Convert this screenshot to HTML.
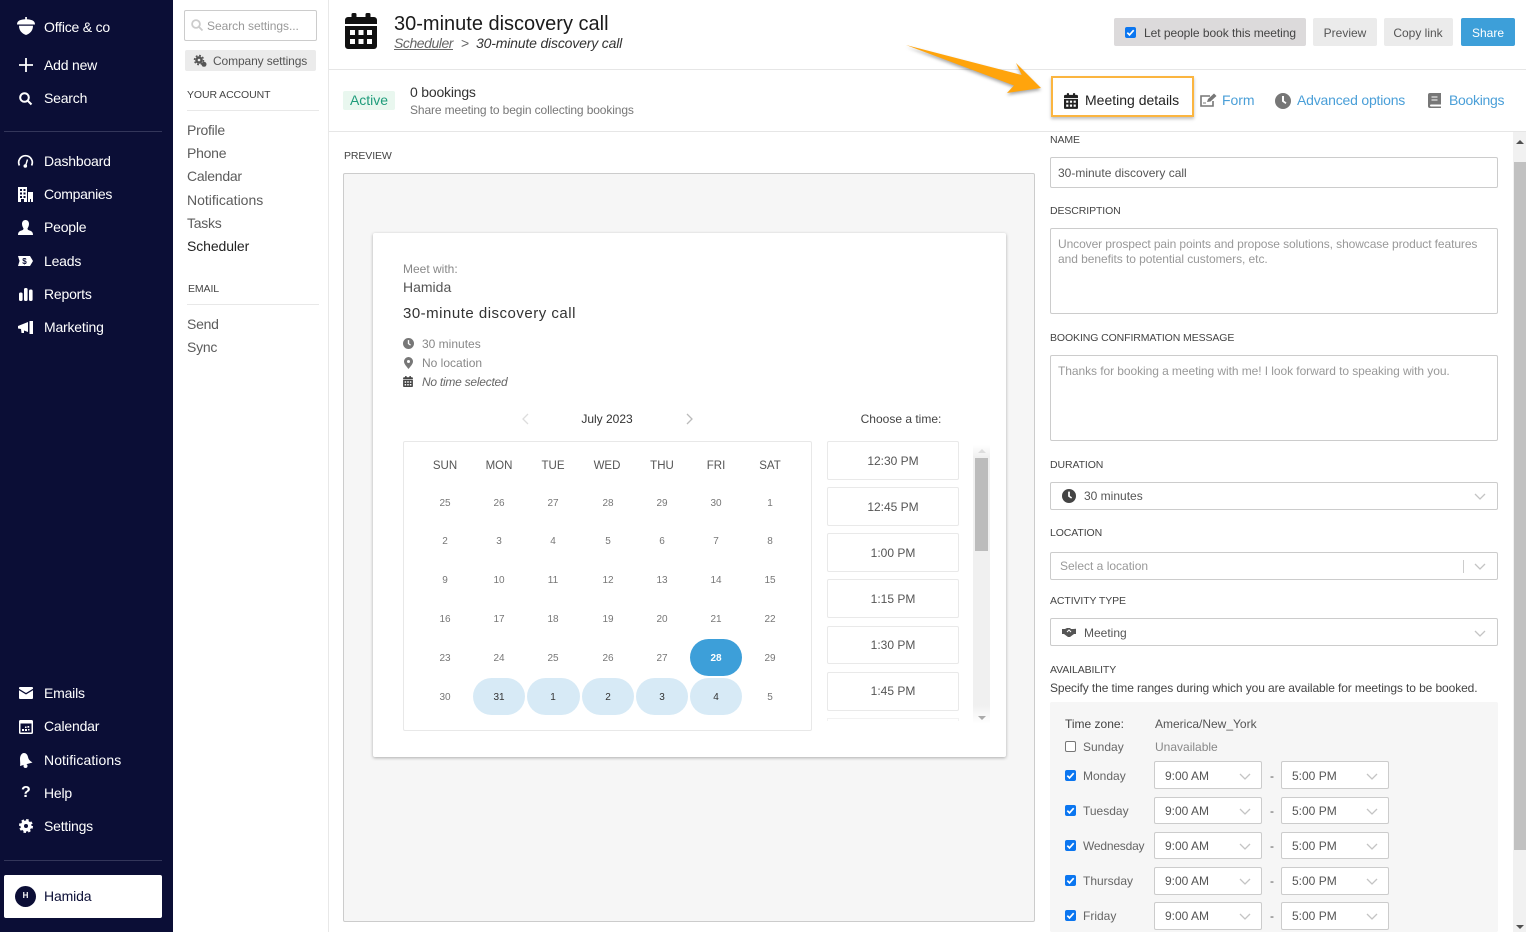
<!DOCTYPE html>
<html lang="en"><head><meta charset="utf-8"><title>30-minute discovery call</title>
<style>
html,body{margin:0;padding:0;width:1526px;height:932px;overflow:hidden;background:#fff}
body{position:relative;font-family:"Liberation Sans",Arial,sans-serif;font-size:14px;color:#333}
.t{position:absolute;white-space:nowrap;line-height:20px}
.c{transform:translateX(-50%);text-align:center}
.b{position:absolute;box-sizing:border-box}
svg.i{position:absolute;overflow:visible}
.w{color:#fff;letter-spacing:-.2px}
.s{color:#5c5c5c;letter-spacing:-.25px}
.l{font-size:10.5px;color:#444;letter-spacing:-.1px}
.f{font-size:12px;color:#555}
.ph{font-size:12px;color:#999}
.in{background:#fff;border:1px solid #ccc;border-radius:2px}
.d{font-size:10px;color:#777}
.h{font-size:11.5px;color:#555}
.sl{background:#fff;border:1px solid #e9e9e9;border-radius:2px;width:132px;height:39px;left:827px}
.tm{font-size:12px;color:#555}
.m{font-size:12px;color:#666}
.p{background:#d7eaf6;border-radius:19px;height:37px;top:678px}
.a{font-size:12px;color:#444}
.bl{color:#4a9fd8}
</style></head><body>
<svg width="0" height="0" style="position:absolute"><defs>
<symbol id="cal" viewBox="0 0 32 36"><path d="M8 0h2a1.5 1.5 0 0 1 1.5 1.5V4h9V1.500A1.500 1.500 0 0 1 22 0h2a1.500 1.500 0 0 1 1.500 1.500V4H29a3 3 0 0 1 3 3v4H0V7a3 3 0 0 1 3-3h3.500V1.500A1.500 1.500 0 0 1 8 0zM0 13h32v20a3 3 0 0 1-3 3H3a3 3 0 0 1-3-3zM5 17v5h5v-5zM13.500 17v5h5v-5zM22 17v5h5v-5zM5 26v5h5v-5zM13.500 26v5h5v-5zM22 26v5h5v-5z" fill-rule="evenodd"/></symbol>
<symbol id="clk" viewBox="0 0 16 16"><path d="M8 0a8 8 0 1 1 0 16A8 8 0 0 1 8 0zM7 3v5.500l3.500 2.500 1-1.400L9 7.800V3z" fill-rule="evenodd"/></symbol>
<symbol id="chv" viewBox="0 0 12 7"><path d="M1 1l5 5 5-5" fill="none" stroke="#c4c4c4" stroke-width="1.300"/></symbol>
<symbol id="chk" viewBox="0 0 11 11"><rect width="11" height="11" rx="2" fill="#0b76f0"/><path d="M2.300 5.700l2.200 2.200 4.200-4.700" fill="none" stroke="#fff" stroke-width="1.700"/></symbol>
</defs></svg>

<!-- sidebar -->
<div class="b" style="left:0;top:0;width:173px;height:932px;background:#0b0e36"></div>
<div class="b" style="left:4px;top:131px;width:158px;height:1px;background:#33365a"></div>
<div class="b" style="left:4px;top:860px;width:158px;height:1px;background:#33365a"></div>
<div class="b" style="left:4px;top:875px;width:158px;height:43px;background:#fff;border-radius:2px"></div>
<div class="b" style="left:15px;top:886px;width:21px;height:21px;border-radius:50%;background:#0b0e36"></div>
<div class="t" style="left:15px;width:21px;text-align:center;top:886px;font-size:8px;font-weight:bold;color:#fff">H</div>

<svg class="i" style="left:17px;top:17px" width="18" height="18" viewBox="0 0 18 18" fill="#fff"><path d="M8.200 0h1.700v2.200C12 2.300 14 2.700 15.500 3.400 17.200 4.200 18 5.500 18 7.500H0C0 5.500.8 4.200 2.500 3.400 4 2.700 6 2.300 8.200 2.200z"/><path d="M2 8.800h14C16 13.500 13.200 16.600 9 18 4.800 16.600 2 13.500 2 8.800z"/></svg>
<svg class="i" style="left:19px;top:58px" width="14" height="14" fill="none" stroke="#fff" stroke-width="1.800"><path d="M7 0v14M0 7h14"/></svg>
<svg class="i" style="left:19px;top:92px" width="13" height="13" fill="none" stroke="#fff" stroke-width="2"><circle cx="5.500" cy="5.500" r="4.300"/><path d="M8.500 8.500l4 4"/></svg>
<svg class="i" style="left:18px;top:155px" width="15" height="13" fill="none" stroke="#fff" stroke-width="1.700"><path d="M1.400 10.500A6.800 6.800 0 1 1 13.600 10.500"/><path d="M9.500 4.500L7.500 11" stroke-width="1.400"/><circle cx="7.300" cy="11" r="1.800" fill="#fff" stroke="none"/></svg>
<svg class="i" style="left:18px;top:187px" width="15" height="15" viewBox="0 0 15 15" fill="#fff"><path d="M0 0h9v15H6v-3H3v3H0zM2 2v2h2V2zM5.500 2v2h2V2zM2 5.500v2h2v-2zM5.500 5.500v2h2v-2zM2 9v2h2V9zM5.500 9v2h2V9zM10 5h5v10h-2v-3h-1v3h-2z" fill-rule="evenodd"/></svg>
<svg class="i" style="left:18px;top:220px" width="15" height="15" viewBox="0 0 15 15" fill="#fff"><path d="M7.500 0C10 0 11 2 11 4c0 2-1 3.500-1.500 4.500 0 1 .5 1.500 2 2 2 .6 3.500 1.500 3.500 4.500H0c0-3 1.500-3.900 3.500-4.500 1.500-.5 2-1 2-2C5 7.500 4 6 4 4c0-2 1-4 3.500-4z"/></svg>
<svg class="i" style="left:18px;top:256px" width="15" height="10" viewBox="0 0 15 10"><path d="M0 0h12l3 5-3 5H0l1.500-5z" fill="#fff"/><text x="6.500" y="8" font-size="8" font-weight="bold" fill="#0b0e36" text-anchor="middle" font-family="Liberation Sans">$</text></svg>
<svg class="i" style="left:19px;top:288px" width="14" height="13" fill="#fff"><rect x="0" y="4.500" width="3.600" height="8.500" rx="1.500"/><rect x="5" y="0" width="3.600" height="13" rx="1.500"/><rect x="10" y="1.500" width="3.600" height="11.500" rx="1.500"/></svg>
<svg class="i" style="left:18px;top:321px" width="15" height="13" viewBox="0 0 15 13" fill="#fff"><path d="M0 5l10-4v10L6 9.500 6 12H3.500L3 8 0 7.500zM11.500 0H15v13h-3.500z" /></svg>
<svg class="i" style="left:19px;top:687px" width="14" height="12" viewBox="0 0 14 12" fill="#fff"><path d="M1 0h12a1 1 0 0 1 1 1v.8L7 6 0 1.800V1a1 1 0 0 1 1-1zM0 3.300L7 7.500l7-4.200V11a1 1 0 0 1-1 1H1a1 1 0 0 1-1-1z"/></svg>
<svg class="i" style="left:19px;top:720px" width="14" height="14" viewBox="0 0 14 14"><rect width="14" height="14" rx="1.500" fill="#fff"/><rect x="1.500" y="3.500" width="11" height="9" fill="#0b0e36"/><path d="M3 9h2v2H3zM6 9h2v2H6zM8.500 6h1.700v1.700H8.500zM6 6.500h1.500V8H6zM9 9h1.500v1.500H9z" fill="#fff"/></svg>
<svg class="i" style="left:19px;top:753px" width="14" height="15" viewBox="0 0 14 15" fill="#fff"><path d="M5 0c2 0 3.500 1.500 4 4 .5 2.500 2 4 4.500 5.500L1 13C1.500 10.500 1 8 1 6 1 3 2.500 0 5 0z"/><circle cx="6.500" cy="13" r="2"/></svg>
<div class="t w" style="left:21px;top:783px;font-size:16px;font-weight:bold">?</div>
<svg class="i" style="left:19px;top:819px" width="14" height="14" viewBox="0 0 14 14"><circle cx="7" cy="7" r="5.500" fill="#fff"/><circle cx="7" cy="7" r="6" fill="none" stroke="#fff" stroke-width="2" stroke-dasharray="2.500 2.210"/><circle cx="7" cy="7" r="2" fill="#0b0e36"/></svg>

<div class="t w" style="left:44px;top:17px">Office &amp; co</div>
<div class="t w" style="left:44px;top:55px">Add new</div>
<div class="t w" style="left:44px;top:88px">Search</div>
<div class="t w" style="left:44px;top:151px">Dashboard</div>
<div class="t w" style="left:44px;top:184px;letter-spacing:-.3px">Companies</div>
<div class="t w" style="left:44px;top:217px">People</div>
<div class="t w" style="left:44px;top:251px">Leads</div>
<div class="t w" style="left:44px;top:284px">Reports</div>
<div class="t w" style="left:44px;top:317px">Marketing</div>
<div class="t w" style="left:44px;top:683px">Emails</div>
<div class="t w" style="left:44px;top:716px">Calendar</div>
<div class="t w" style="left:44px;top:750px;letter-spacing:.08px">Notifications</div>
<div class="t w" style="left:44px;top:783px">Help</div>
<div class="t w" style="left:44px;top:816px">Settings</div>
<div class="t" style="left:44px;top:886px;color:#0b0e36;letter-spacing:-.15px">Hamida</div>

<!-- settings col -->
<div class="b" style="left:328px;top:0;width:1px;height:932px;background:#e8e8e8"></div>
<div class="b" style="left:184px;top:10px;width:133px;height:31px;border:1px solid #ccc;border-radius:2px"></div>
<svg class="i" style="left:191px;top:19px" width="12" height="12" fill="none" stroke="#ccc" stroke-width="1.800"><circle cx="5" cy="5" r="3.900"/><path d="M8 8l3.500 3.500"/></svg>
<div class="t ph" style="left:207px;top:16px;letter-spacing:-.05px">Search settings...</div>
<div class="b" style="left:185px;top:50px;width:131px;height:21px;background:#ebebeb;border-radius:2px"></div>
<svg class="i" style="left:194px;top:55px" width="13" height="12" viewBox="0 0 13 12"><circle cx="5" cy="5" r="3.800" fill="#555"/><circle cx="5" cy="5" r="4.500" fill="none" stroke="#555" stroke-width="1.500" stroke-dasharray="1.800 1.730"/><circle cx="5" cy="5" r="1.300" fill="#ebebeb"/><circle cx="10" cy="9.300" r="2.500" fill="#555"/></svg>
<div class="t f" style="left:213px;top:51px;letter-spacing:-.12px">Company settings</div>
<div class="t l" style="left:187px;top:85px">YOUR ACCOUNT</div>
<div class="b" style="left:187px;top:110px;width:132px;height:1px;background:#e8e8e8"></div>
<div class="t s" style="left:187px;top:120px">Profile</div>
<div class="t s" style="left:187px;top:143px">Phone</div>
<div class="t s" style="left:187px;top:166px">Calendar</div>
<div class="t s" style="left:187px;top:190px;letter-spacing:0">Notifications</div>
<div class="t s" style="left:187px;top:213px">Tasks</div>
<div class="t" style="left:187px;top:236px;color:#222;letter-spacing:-.1px">Scheduler</div>
<div class="t l" style="left:188px;top:279px">EMAIL</div>
<div class="b" style="left:187px;top:304px;width:132px;height:1px;background:#e8e8e8"></div>
<div class="t s" style="left:187px;top:314px">Send</div>
<div class="t s" style="left:187px;top:337px">Sync</div>

<!-- header -->
<div class="b" style="left:329px;top:69px;width:1197px;height:1px;background:#e6e6e6"></div>
<div class="b" style="left:329px;top:131px;width:1197px;height:1px;background:#e6e6e6"></div>
<svg class="i" style="left:345px;top:13px;fill:#111" width="32" height="36"><use href="#cal"/></svg>
<div class="t" style="left:394px;top:14px;font-size:20px;color:#1b1b1b">30-minute discovery call</div>
<div class="t" style="left:394px;top:33px;font-style:italic;color:#666;text-decoration:underline;letter-spacing:-.45px">Scheduler</div>
<div class="t" style="left:461px;top:33px;color:#666">&gt;</div>
<div class="t" style="left:476px;top:33px;font-style:italic;color:#333;letter-spacing:-.17px">30-minute discovery call</div>

<div class="b" style="left:1114px;top:18px;width:192px;height:28px;background:#dcdadb;border-radius:2px"></div>
<svg class="i" style="left:1125px;top:27px" width="11" height="11"><use href="#chk"/></svg>
<div class="t a" style="left:1144px;top:23px;letter-spacing:-.05px">Let people book this meeting</div>
<div class="b" style="left:1313px;top:18px;width:64px;height:28px;background:#ebebeb;border-radius:2px"></div>
<div class="t a c" style="left:1345px;top:23px;color:#555">Preview</div>
<div class="b" style="left:1384px;top:18px;width:69px;height:28px;background:#ebebeb;border-radius:2px"></div>
<div class="t a c" style="left:1418px;top:23px;color:#555">Copy link</div>
<div class="b" style="left:1461px;top:18px;width:54px;height:28px;background:#3d9fd9;border-radius:2px"></div>
<div class="t a c" style="left:1488px;top:23px;color:#fff">Share</div>

<div class="b" style="left:343px;top:91px;width:52px;height:19px;background:#e9f7ef;border-radius:2px"></div>
<div class="t c" style="left:369px;top:90px;color:#1f9c7b">Active</div>
<div class="t" style="left:410px;top:82px;color:#333;letter-spacing:-.2px">0 bookings</div>
<div class="t" style="left:410px;top:100px;font-size:12px;color:#777;letter-spacing:-.12px">Share meeting to begin collecting bookings</div>

<!-- arrow -->
<svg class="i" style="left:900px;top:40px;filter:drop-shadow(0 2px 1.500px rgba(0,0,0,.35))" width="150" height="60" viewBox="900 40 150 60"><path d="M906 45L1021.700 75L1016 63L1041 88L1007 93L1014 85.500Z" fill="#ffa40c"/></svg>

<!-- tabs -->
<div class="b" style="left:1051px;top:76px;width:143px;height:41px;background:#fff;border:2px solid #fbb540;box-shadow:0 2px 3px rgba(0,0,0,.25)"></div>
<svg class="i" style="left:1064px;top:93px;fill:#222" width="14" height="16"><use href="#cal"/></svg>
<div class="t" style="left:1085px;top:90px;color:#222">Meeting details</div>
<svg class="i" style="left:1200px;top:93px" width="17" height="14" viewBox="0 0 17 14"><path d="M10 3H1v10h12V8" fill="none" stroke="#777" stroke-width="1.600"/><path d="M7 9l1-3 6-5.500L16.500 3l-6 5.500z" fill="#777"/><path d="M3 10h3" stroke="#777"/></svg>
<div class="t bl" style="left:1222px;top:90px;letter-spacing:-.05px">Form</div>
<svg class="i" style="left:1275px;top:93px;fill:#777" width="16" height="16"><use href="#clk"/></svg>
<div class="t bl" style="left:1297px;top:90px;letter-spacing:-.2px">Advanced options</div>
<svg class="i" style="left:1428px;top:93px" width="13" height="15" viewBox="0 0 13 15"><path d="M2 0h11v11.500H3a1 1 0 0 0 0 2h10V15H2a2 2 0 0 1-2-2V2a2 2 0 0 1 2-2zM3.500 3.500v1h6v-1zM3.500 6.500v1h6v-1z" fill="#777" fill-rule="evenodd"/></svg>
<div class="t bl" style="left:1449px;top:90px;letter-spacing:-.3px">Bookings</div>

<!-- preview -->
<div class="t l" style="left:344px;top:146px">PREVIEW</div>
<div class="b" style="left:343px;top:173px;width:692px;height:749px;background:#f6f6f6;border:1px solid #ccc;border-radius:2px"></div>
<div class="b" style="left:373px;top:233px;width:633px;height:524px;background:#fff;border-radius:2px;box-shadow:0 1px 3px rgba(0,0,0,.3)"></div>
<div class="t m" style="left:403px;top:259px;color:#888">Meet with:</div>
<div class="t" style="left:403px;top:277px;color:#555">Hamida</div>
<div class="t" style="left:403px;top:304px;font-size:15px;color:#333;letter-spacing:.5px">30-minute discovery call</div>
<svg class="i" style="left:403px;top:338px;fill:#777" width="11" height="11"><use href="#clk"/></svg>
<div class="t m" style="left:422px;top:334px;color:#888">30 minutes</div>
<svg class="i" style="left:404px;top:357px" width="9" height="12" viewBox="0 0 9 12"><path d="M4.500 0A4.500 4.500 0 0 1 9 4.500C9 7 6 10 4.500 12 3 10 0 7 0 4.500A4.500 4.500 0 0 1 4.500 0zm0 3a1.500 1.500 0 1 0 0 3 1.500 1.500 0 0 0 0-3z" fill="#777" fill-rule="evenodd"/></svg>
<div class="t m" style="left:422px;top:353px;color:#888">No location</div>
<svg class="i" style="left:403px;top:376px;fill:#444" width="10" height="11"><use href="#cal"/></svg>
<div class="t m" style="left:422px;top:372px;font-style:italic;color:#666;letter-spacing:-.25px">No time selected</div>
<svg class="i" style="left:522px;top:414px" width="7" height="10" fill="none" stroke="#ddd" stroke-width="1.300"><path d="M6 0L1 5l5 5"/></svg>
<svg class="i" style="left:686px;top:414px" width="7" height="10" fill="none" stroke="#bbb" stroke-width="1.300"><path d="M1 0l5 5-5 5"/></svg>
<div class="t c" style="left:607px;top:409px;font-size:12px;color:#333">July 2023</div>
<div class="t c" style="left:901px;top:409px;font-size:12px;color:#444">Choose a time:</div>

<div class="b" style="left:403px;top:441px;width:409px;height:290px;border:1px solid #e8e8e8;border-radius:2px"></div>
<div class="t h c" style="left:445px;top:456px">SUN</div><div class="t h c" style="left:499px;top:456px">MON</div><div class="t h c" style="left:553px;top:456px">TUE</div><div class="t h c" style="left:607px;top:456px">WED</div><div class="t h c" style="left:662px;top:456px">THU</div><div class="t h c" style="left:716px;top:456px">FRI</div><div class="t h c" style="left:770px;top:456px">SAT</div>

<div class="t d c" style="left:445px;top:494px">25</div><div class="t d c" style="left:499px;top:494px">26</div><div class="t d c" style="left:553px;top:494px">27</div><div class="t d c" style="left:608px;top:494px">28</div><div class="t d c" style="left:662px;top:494px">29</div><div class="t d c" style="left:716px;top:494px">30</div><div class="t d c" style="left:770px;top:494px">1</div>
<div class="t d c" style="left:445px;top:532px">2</div><div class="t d c" style="left:499px;top:532px">3</div><div class="t d c" style="left:553px;top:532px">4</div><div class="t d c" style="left:608px;top:532px">5</div><div class="t d c" style="left:662px;top:532px">6</div><div class="t d c" style="left:716px;top:532px">7</div><div class="t d c" style="left:770px;top:532px">8</div>
<div class="t d c" style="left:445px;top:571px">9</div><div class="t d c" style="left:499px;top:571px">10</div><div class="t d c" style="left:553px;top:571px">11</div><div class="t d c" style="left:608px;top:571px">12</div><div class="t d c" style="left:662px;top:571px">13</div><div class="t d c" style="left:716px;top:571px">14</div><div class="t d c" style="left:770px;top:571px">15</div>
<div class="t d c" style="left:445px;top:610px">16</div><div class="t d c" style="left:499px;top:610px">17</div><div class="t d c" style="left:553px;top:610px">18</div><div class="t d c" style="left:608px;top:610px">19</div><div class="t d c" style="left:662px;top:610px">20</div><div class="t d c" style="left:716px;top:610px">21</div><div class="t d c" style="left:770px;top:610px">22</div>
<div class="b" style="left:690px;top:639px;width:52px;height:37px;border-radius:19px;background:#3d9fd9"></div>
<div class="t d c" style="left:445px;top:649px">23</div><div class="t d c" style="left:499px;top:649px">24</div><div class="t d c" style="left:553px;top:649px">25</div><div class="t d c" style="left:608px;top:649px">26</div><div class="t d c" style="left:662px;top:649px">27</div><div class="t d c" style="left:716px;top:649px;color:#fff;font-weight:bold">28</div><div class="t d c" style="left:770px;top:649px">29</div>
<div class="b p" style="left:473px;width:52px"></div><div class="b p" style="left:527px;width:53px"></div><div class="b p" style="left:582px;width:52px"></div><div class="b p" style="left:636px;width:52px"></div><div class="b p" style="left:690px;width:52px"></div>
<div class="t d c" style="left:445px;top:688px">30</div><div class="t d c" style="left:499px;top:688px;color:#333">31</div><div class="t d c" style="left:553px;top:688px;color:#333">1</div><div class="t d c" style="left:608px;top:688px;color:#333">2</div><div class="t d c" style="left:662px;top:688px;color:#333">3</div><div class="t d c" style="left:716px;top:688px;color:#333">4</div><div class="t d c" style="left:770px;top:688px">5</div>

<div class="b sl" style="top:441px"></div><div class="t tm c" style="left:893px;top:451px">12:30 PM</div>
<div class="b sl" style="top:487px"></div><div class="t tm c" style="left:893px;top:497px">12:45 PM</div>
<div class="b sl" style="top:533px"></div><div class="t tm c" style="left:893px;top:543px">1:00 PM</div>
<div class="b sl" style="top:579px"></div><div class="t tm c" style="left:893px;top:589px">1:15 PM</div>
<div class="b sl" style="top:626px;height:38px"></div><div class="t tm c" style="left:893px;top:635px">1:30 PM</div>
<div class="b sl" style="top:672px"></div><div class="t tm c" style="left:893px;top:681px">1:45 PM</div>
<div class="b" style="left:827px;top:718px;width:132px;height:3px;border:1px solid #f2f2f2;border-bottom:0"></div>
<div class="b" style="left:973px;top:445px;width:17px;height:279px;background:linear-gradient(#fff 0,#f0f0f0 12px,#f0f0f0 260px,#fff 100%)"></div>
<div class="b" style="left:975px;top:458px;width:13px;height:93px;background:#bcbcbc"></div>
<div class="b" style="left:978px;top:449px;width:0;height:0;border:4px solid transparent;border-top:0;border-bottom:4px solid #ddd"></div>
<div class="b" style="left:978px;top:716px;width:0;height:0;border:4px solid transparent;border-bottom:0;border-top:4px solid #aaa"></div>

<!-- form -->
<div class="t l" style="left:1050px;top:130px">NAME</div>
<div class="b in" style="left:1050px;top:157px;width:448px;height:31px"></div>
<div class="t f" style="left:1058px;top:163px">30-minute discovery call</div>
<div class="t l" style="left:1050px;top:201px">DESCRIPTION</div>
<div class="b in" style="left:1050px;top:228px;width:448px;height:86px"></div>
<div class="t ph" style="left:1058px;top:234px;letter-spacing:-.09px">Uncover prospect pain points and propose solutions, showcase product features</div>
<div class="t ph" style="left:1058px;top:249px;letter-spacing:-.06px">and benefits to potential customers, etc.</div>
<div class="t l" style="left:1050px;top:328px">BOOKING CONFIRMATION MESSAGE</div>
<div class="b in" style="left:1050px;top:355px;width:448px;height:86px"></div>
<div class="t ph" style="left:1058px;top:361px;letter-spacing:-.07px">Thanks for booking a meeting with me! I look forward to speaking with you.</div>
<div class="t l" style="left:1050px;top:455px">DURATION</div>
<div class="b in" style="left:1050px;top:482px;width:448px;height:28px"></div>
<svg class="i" style="left:1062px;top:489px;fill:#444" width="14" height="14"><use href="#clk"/></svg>
<div class="t f" style="left:1084px;top:486px">30 minutes</div>
<svg class="i" style="left:1474px;top:493px" width="12" height="7"><use href="#chv"/></svg>
<div class="t l" style="left:1050px;top:523px">LOCATION</div>
<div class="b in" style="left:1050px;top:552px;width:448px;height:28px"></div>
<div class="t ph" style="left:1060px;top:556px">Select a location</div>
<div class="b" style="left:1463px;top:560px;width:1px;height:13px;background:#ccc"></div>
<svg class="i" style="left:1474px;top:563px" width="12" height="7"><use href="#chv"/></svg>
<div class="t l" style="left:1050px;top:591px">ACTIVITY TYPE</div>
<div class="b in" style="left:1050px;top:618px;width:448px;height:28px"></div>
<svg class="i" style="left:1062px;top:628px" width="14" height="9" viewBox="0 0 14 9"><path d="M0 1h3l2-1h3l1 1h2l3-.2V6h-2L8 9H6L2 6H0z" fill="#555"/><path d="M5 4l2-2 2 2" stroke="#fff" fill="none"/></svg>
<div class="t f" style="left:1084px;top:623px">Meeting</div>
<svg class="i" style="left:1474px;top:630px" width="12" height="7"><use href="#chv"/></svg>
<div class="t l" style="left:1050px;top:660px">AVAILABILITY</div>
<div class="t f" style="left:1050px;top:678px;color:#444;letter-spacing:-.1px">Specify the time ranges during which you are available for meetings to be booked.</div>
<div class="b" style="left:1050px;top:702px;width:448px;height:230px;background:#f6f6f6;border-radius:2px"></div>
<div class="t f" style="left:1065px;top:714px;color:#444">Time zone:</div>
<div class="t f" style="left:1155px;top:714px">America/New_York</div>
<div class="b" style="left:1065px;top:741px;width:11px;height:11px;background:#fff;border:1px solid #777;border-radius:2px"></div>
<div class="t f" style="left:1083px;top:737px;color:#666">Sunday</div>
<div class="t f" style="left:1155px;top:737px;color:#888">Unavailable</div>

<svg class="i" style="left:1065px;top:770px" width="11" height="11"><use href="#chk"/></svg><div class="t f" style="left:1083px;top:766px;color:#666">Monday</div>
<div class="b in" style="left:1154px;top:761px;width:108px;height:28px"></div><div class="t f" style="left:1165px;top:766px">9:00 AM</div><svg class="i" style="left:1239px;top:773px" width="12" height="7"><use href="#chv"/></svg><div class="t f" style="left:1270px;top:766px">-</div>
<div class="b in" style="left:1281px;top:761px;width:108px;height:28px"></div><div class="t f" style="left:1292px;top:766px">5:00 PM</div><svg class="i" style="left:1366px;top:773px" width="12" height="7"><use href="#chv"/></svg>

<svg class="i" style="left:1065px;top:805px" width="11" height="11"><use href="#chk"/></svg><div class="t f" style="left:1083px;top:801px;color:#666">Tuesday</div>
<div class="b in" style="left:1154px;top:797px;width:108px;height:27px"></div><div class="t f" style="left:1165px;top:801px">9:00 AM</div><svg class="i" style="left:1239px;top:808px" width="12" height="7"><use href="#chv"/></svg><div class="t f" style="left:1270px;top:801px">-</div>
<div class="b in" style="left:1281px;top:797px;width:108px;height:27px"></div><div class="t f" style="left:1292px;top:801px">5:00 PM</div><svg class="i" style="left:1366px;top:808px" width="12" height="7"><use href="#chv"/></svg>

<svg class="i" style="left:1065px;top:840px" width="11" height="11"><use href="#chk"/></svg><div class="t f" style="left:1083px;top:836px;color:#666;letter-spacing:-.2px">Wednesday</div>
<div class="b in" style="left:1154px;top:832px;width:108px;height:27px"></div><div class="t f" style="left:1165px;top:836px">9:00 AM</div><svg class="i" style="left:1239px;top:843px" width="12" height="7"><use href="#chv"/></svg><div class="t f" style="left:1270px;top:836px">-</div>
<div class="b in" style="left:1281px;top:832px;width:108px;height:27px"></div><div class="t f" style="left:1292px;top:836px">5:00 PM</div><svg class="i" style="left:1366px;top:843px" width="12" height="7"><use href="#chv"/></svg>

<svg class="i" style="left:1065px;top:875px" width="11" height="11"><use href="#chk"/></svg><div class="t f" style="left:1083px;top:871px;color:#666">Thursday</div>
<div class="b in" style="left:1154px;top:867px;width:108px;height:28px"></div><div class="t f" style="left:1165px;top:871px">9:00 AM</div><svg class="i" style="left:1239px;top:878px" width="12" height="7"><use href="#chv"/></svg><div class="t f" style="left:1270px;top:871px">-</div>
<div class="b in" style="left:1281px;top:867px;width:108px;height:28px"></div><div class="t f" style="left:1292px;top:871px">5:00 PM</div><svg class="i" style="left:1366px;top:878px" width="12" height="7"><use href="#chv"/></svg>

<svg class="i" style="left:1065px;top:910px" width="11" height="11"><use href="#chk"/></svg><div class="t f" style="left:1083px;top:906px;color:#666">Friday</div>
<div class="b in" style="left:1154px;top:902px;width:108px;height:28px"></div><div class="t f" style="left:1165px;top:906px">9:00 AM</div><svg class="i" style="left:1239px;top:913px" width="12" height="7"><use href="#chv"/></svg><div class="t f" style="left:1270px;top:906px">-</div>
<div class="b in" style="left:1281px;top:902px;width:108px;height:28px"></div><div class="t f" style="left:1292px;top:906px">5:00 PM</div><svg class="i" style="left:1366px;top:913px" width="12" height="7"><use href="#chv"/></svg>

<!-- page scrollbar -->
<div class="b" style="left:1513px;top:132px;width:13px;height:800px;background:#f1f1f1"></div>
<div class="b" style="left:1514px;top:162px;width:12px;height:688px;background:#c1c1c1"></div>
<div class="b" style="left:1516px;top:140px;width:0;height:0;border:4px solid transparent;border-top:0;border-bottom:4px solid #505050"></div>
<div class="b" style="left:1516px;top:925px;width:0;height:0;border:4px solid transparent;border-bottom:0;border-top:4px solid #505050"></div>
</body></html>
